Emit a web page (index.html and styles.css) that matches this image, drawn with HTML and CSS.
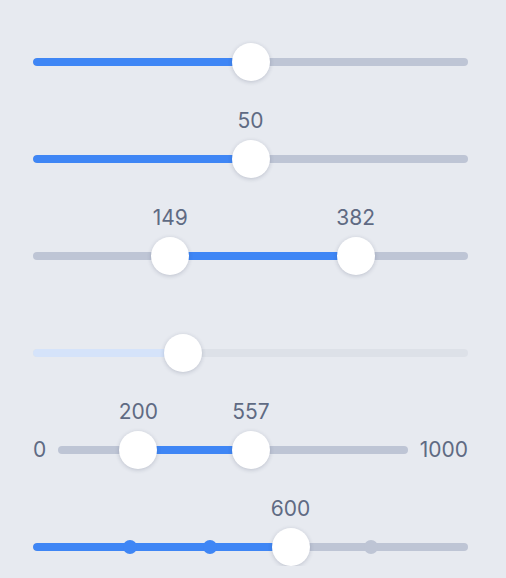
FILE: index.html
```html
<!DOCTYPE html>
<html lang="en">
<head>
<meta charset="utf-8">
<title>Sliders</title>
<link rel="stylesheet" href="styles.css">
</head>
<body>
<main class="stack">
  <div class="row">
    <div class="slider">
      <div class="track"><div class="fill" style="left:0;width:calc(17px + (100% - 34px) * 0.5)"></div></div>
      <div class="rail">
        <span class="thumb" style="left:50%"></span>
      </div>
    </div>
  </div>

  <div class="row">
    <div class="slider">
      <div class="track"><div class="fill" style="left:0;width:calc(17px + (100% - 34px) * 0.5)"></div></div>
      <div class="rail">
        <span class="thumb" style="left:50%"><span class="label">50</span></span>
      </div>
    </div>
  </div>

  <div class="row">
    <div class="slider">
      <div class="track"><div class="fill" style="left:calc(17px + (100% - 34px) * 0.3);width:calc((100% - 34px) * 0.4625)"></div></div>
      <div class="rail">
        <span class="thumb" style="left:30%"><span class="label">149</span></span>
        <span class="thumb" style="left:76.25%"><span class="label">382</span></span>
      </div>
    </div>
  </div>

  <div class="row">
    <div class="slider disabled">
      <div class="track"><div class="fill" style="left:0;width:calc(17px + (100% - 34px) * 0.3325)"></div></div>
      <div class="rail">
        <span class="thumb" style="left:33.25%"></span>
      </div>
    </div>
  </div>

  <div class="row">
    <div class="ranged">
      <span class="bound">0</span>
      <div class="slider">
        <div class="track"><div class="fill" style="left:calc(17px + (100% - 34px) * 0.2);width:calc((100% - 34px) * 0.357)"></div></div>
        <div class="rail">
          <span class="thumb" style="left:20%"><span class="label">200</span></span>
          <span class="thumb" style="left:55.7%"><span class="label">557</span></span>
        </div>
      </div>
      <span class="bound">1000</span>
    </div>
  </div>

  <div class="row">
    <div class="slider">
      <div class="track"><div class="fill" style="left:0;width:calc(17px + (100% - 34px) * 0.6)"></div></div>
      <div class="rail">
        <span class="dot on" style="left:20%"></span>
        <span class="dot on" style="left:40%"></span>
        <span class="dot" style="left:80%"></span>
        <span class="thumb" style="left:60%"><span class="label">600</span></span>
      </div>
    </div>
  </div>
</main>
</body>
</html>
```

FILE: styles.css
```css
html, body {
  margin: 0;
  padding: 0;
  background: #e7eaf0;
}

body {
  padding: 12px 38px 0 33px;
  font-family: Inter, "Noto Sans", sans-serif;
  color: #5d6882;
}

.stack {
  display: flex;
  flex-direction: column;
  gap: 28px;
}

.row {
  padding-top: 31px;
}

.slider {
  position: relative;
  height: 38px;
  flex: 1;
}

.track {
  position: absolute;
  left: 0;
  right: 0;
  top: 15px;
  height: 8px;
  border-radius: 4px;
  background: #bec5d5;
  overflow: hidden;
}

.fill {
  position: absolute;
  top: 0;
  bottom: 0;
  background: #3f86f5;
  border-radius: 4px;
}

.rail {
  position: absolute;
  top: 0;
  bottom: 0;
  left: 17px;
  right: 17px;
}

.thumb {
  position: absolute;
  top: 0;
  width: 38px;
  height: 38px;
  margin-left: -19px;
  border-radius: 50%;
  background: #ffffff;
  box-shadow: 0 1px 4px rgba(40, 50, 80, 0.22);
  z-index: 2;
}

.label {
  position: absolute;
  bottom: calc(100% + 7px);
  left: 50%;
  transform: translateX(-50%);
  font-size: 21px;
  line-height: 24px;
  white-space: nowrap;
  color: #5f6a83;
}

.dot {
  position: absolute;
  top: 12px;
  width: 14px;
  height: 14px;
  margin-left: -7px;
  border-radius: 50%;
  background: #bec5d5;
  z-index: 1;
}

.dot.on {
  background: #3f86f5;
}

.disabled .track {
  background: #dde1e8;
}

.disabled .fill {
  background: #d5e3fa;
}

.ranged {
  display: flex;
  align-items: center;
  gap: 12px;
}

.bound {
  font-size: 21px;
  line-height: 24px;
  color: #5f6a83;
}
```
